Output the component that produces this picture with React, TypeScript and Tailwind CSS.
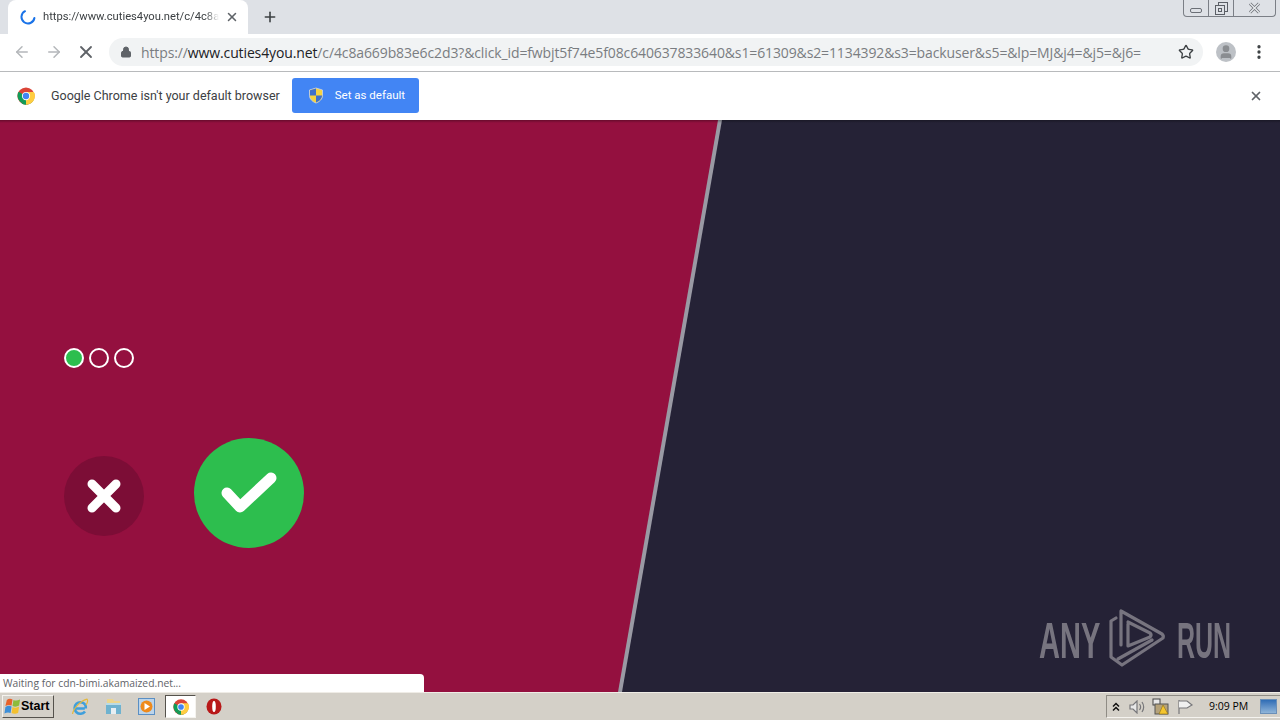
import { ArrowLeft, ArrowRight, X, Lock, Star, MoreVertical, Plus, User } from "lucide-react"

const sans = "font-['Open_Sans','Noto_Sans',sans-serif]"
const narrow = "font-['Roboto','Liberation_Sans',sans-serif]"

function ChromeLogo({ size = 18 }: { size?: number }) {
  return (
    <svg width={size} height={size} viewBox="0 0 48 48">
      <circle cx="24" cy="24" r="23" fill="#db4437" />
      <path d="M24 24 L44 35.5 A23 23 0 0 1 12.5 44 Z" fill="#0f9d58" />
      <path d="M24 13 H45 A23 23 0 0 1 24 47 L24 24 Z" fill="#ffcd40" />
      <path d="M24 24 L13.5 43 A23 23 0 0 1 4 12.5 Z" fill="#0f9d58" />
      <circle cx="24" cy="24" r="11" fill="#fff" />
      <circle cx="24" cy="24" r="8.5" fill="#4285f4" />
    </svg>
  )
}

function ShieldIcon() {
  return (
    <svg width="16" height="17" viewBox="0 0 16 17">
      <path d="M8 1 L14.5 3 V8.5 C14.5 12 11.5 14.8 8 16 C4.5 14.8 1.5 12 1.5 8.5 V3 Z" fill="#f5d33f" stroke="#c9d3e6" strokeWidth="0.8" />
      <path d="M8 1.5 V8.5 H2 V3.3 Z" fill="#3f70c9" />
      <path d="M8 8.5 H14 C14 11.8 11 14.4 8 15.4 Z" fill="#3f70c9" />
    </svg>
  )
}

function StartFlag() {
  return (
    <svg width="17" height="17" viewBox="0 0 18 18">
      <path d="M3 2 C5 0.5 7 0.5 9 1.5 L8 8 C6 7 4 7 1.5 8.5 Z" fill="#e8622a" />
      <path d="M10 2 C12 3 14 3 17 1.5 L16 8 C14 9.5 11 9.5 9 8.5 Z" fill="#8dbb3a" />
      <path d="M1.5 9.5 C4 8 6 8 8 9 L7 16 C5 15 3 15 0.5 16.5 Z" fill="#3d8fd8" />
      <path d="M9 9.5 C11 10.5 14 10.5 16 9 L15 15.5 C13 17 10 17 8 16 Z" fill="#f3c02f" />
    </svg>
  )
}

function IeIcon() {
  return (
    <svg width="18" height="18" viewBox="0 0 18 18" fill="none">
      <path d="M13.8 10.5 H4.5 M14 13.5 A5.8 5.8 0 1 1 14 6.5 Q15 8 14.8 10.5" stroke="#3f9fdc" strokeWidth="2.6" />
      <path d="M1.5 16 C2.5 10 10 2.5 16 1.2 C17.5 3 16 5.5 15 7" stroke="#e5b93d" strokeWidth="1.2" />
    </svg>
  )
}

function FolderIcon() {
  return (
    <svg width="17" height="17" viewBox="0 0 17 17">
      <path d="M2 1 H8 L9 3 H15 V10 H2 Z" fill="#ecd58e" />
      <rect x="1" y="5" width="15" height="11" fill="#6fb2cf" />
      <rect x="1" y="5" width="15" height="2" fill="#b9dbe6" />
      <rect x="6" y="10" width="5" height="6" fill="#e7eef2" />
    </svg>
  )
}

function MediaIcon() {
  return (
    <svg width="17" height="17" viewBox="0 0 17 17">
      <rect x="0.5" y="0.5" width="16" height="16" fill="#bcd4ea" stroke="#5a8fc4" />
      <circle cx="8.5" cy="8.5" r="6" fill="#ee8a1c" />
      <path d="M6.5 5 L12 8.5 L6.5 12 Z" fill="#fff" />
    </svg>
  )
}

function OperaIcon() {
  return (
    <svg width="16" height="17" viewBox="0 0 16 17">
      <ellipse cx="8" cy="8.5" rx="7.5" ry="8" fill="#b81818" />
      <ellipse cx="8" cy="8.5" rx="1.8" ry="5.5" fill="#fff" />
    </svg>
  )
}

function PlayMark() {
  return (
    <svg width="58" height="62" viewBox="8 4 58 62" fill="none" stroke="#77747f" strokeWidth="3.2" strokeLinejoin="round" strokeLinecap="round">
      <path d="M16 14 L11 17 V53 L22 61 L63 34 Q64 32 62 30 L21 7 V41" />
      <path d="M28 20 V42 L50 33 Q52 31 50 29 L28 18" />
      <path d="M18 55 L52 36" />
    </svg>
  )
}

export default function App() {
  return (
    <div className={`flex h-[720px] w-[1280px] flex-col overflow-hidden ${sans}`}>
      {/* tab strip */}
      <div className="relative flex h-[34px] shrink-0 items-end bg-[#dee1e6] pl-2">
        <div className="flex h-[34px] w-[240px] items-center rounded-t-lg bg-white pl-[12px] pr-[9px]">
          <svg width="16" height="16" viewBox="0 0 16 16" fill="none" className="mr-[7px] shrink-0">
            <path d="M5 2.2 A6.5 6.5 0 1 0 14.4 9" stroke="#1a73e8" strokeWidth="2" strokeLinecap="round" />
          </svg>
          <span className={`w-[176px] whitespace-nowrap text-[11.2px] text-[#3c4043] [mask-image:linear-gradient(to_right,black_92%,transparent)] ${narrow}`}>
            https://www.cuties4you.net/c/4c8a
          </span>
          <X className="ml-auto h-[14px] w-[14px] text-[#5f6368]" strokeWidth={2.6} />
        </div>
        <Plus className="mb-[9px] ml-[14px] h-[16px] w-[16px] text-[#3c4043]" strokeWidth={2.4} />
        {/* window buttons */}
        <div className="absolute right-[4px] top-0 flex h-[17px] w-[93px] rounded-b-[4px] border border-t-0 border-[#7b7f86] bg-[#dee1e6]">
          <div className="flex w-[25px] items-end justify-center border-r border-[#7b7f86] pb-[3px]">
            <div className="h-[5px] w-[12px] rounded-[2px] border border-[#6b6f76]" />
          </div>
          <div className="flex w-[25px] items-center justify-center border-r border-[#7b7f86]">
            <svg width="13" height="13" viewBox="0 0 13 13" fill="none" stroke="#5b5f66">
              <rect x="3.5" y="0.5" width="9" height="9" />
              <rect x="0.5" y="3.5" width="9" height="9" fill="#dee1e6" />
              <rect x="3.5" y="6.5" width="3" height="3" />
            </svg>
          </div>
          <div className="flex flex-1 items-center justify-center">
            <svg width="13" height="12" viewBox="0 0 13 12" fill="none">
              <path d="M2 1.5 L11 10.5 M11 1.5 L2 10.5" stroke="#6f7379" strokeWidth="3" />
              <path d="M2 1.5 L11 10.5 M11 1.5 L2 10.5" stroke="#e8eaed" strokeWidth="1.4" />
            </svg>
          </div>
        </div>
      </div>

      {/* toolbar */}
      <div className="flex h-[38px] shrink-0 items-center border-b border-[#b8babc] bg-white pb-px">
        <ArrowLeft className="ml-[13px] h-[18px] w-[18px] text-[#b4b7ba]" strokeWidth={2} />
        <ArrowRight className="ml-[14px] h-[18px] w-[18px] text-[#b4b7ba]" strokeWidth={2} />
        <X className="ml-[13px] h-[20px] w-[20px] text-[#5f6368]" strokeWidth={2.2} />
        <div className="ml-[13px] flex h-[28px] w-[1094px] items-center rounded-full bg-[#f1f3f4] pl-[11px]">
          <Lock className="h-[12px] w-[12px] fill-[#5f6368] text-[#5f6368]" strokeWidth={2} />
          <span className="ml-[9px] whitespace-nowrap text-[14px] tracking-[-0.12px] text-[#7a7d81]">
            https://<span className="text-[#202124]">www.cuties4you.net</span>/c/4c8a669b83e6c2d3?&click_id=fwbjt5f74e5f08c640637833640&s1=61309&s2=1134392&s3=backuser&s5=&lp=MJ&j4=&j5=&j6=
          </span>
          <Star className="ml-auto mr-[9px] h-[16px] w-[16px] text-[#3c4043]" strokeWidth={2} />
        </div>
        <div className="ml-[13px] flex h-[20px] w-[20px] items-center justify-center overflow-hidden rounded-full bg-[#bdc1c6]">
          <User className="h-[16px] w-[16px] fill-[#8a8d91] text-[#8a8d91]" />
        </div>
        <MoreVertical className="ml-[14px] h-[18px] w-[18px] text-[#3c4043]" strokeWidth={2.4} />
      </div>

      {/* default browser bar */}
      <div className="flex h-[48px] shrink-0 items-center bg-white pl-[17px]">
        <ChromeLogo />
        <span className={`ml-[16px] text-[12.5px] text-[#3c4043] ${narrow}`}>Google Chrome isn't your default browser</span>
        <div className="mb-[1px] ml-[12px] flex h-[35px] w-[127px] items-center rounded-[3px] bg-[#4285f4] pl-[16px]">
          <ShieldIcon />
          <span className={`ml-[11px] text-[11.5px] text-white ${narrow}`}>Set as default</span>
        </div>
        <X className="ml-auto mr-[17px] h-[14px] w-[14px] text-[#5f6368]" strokeWidth={3} />
      </div>

      {/* page */}
      <div className="relative flex-1 overflow-hidden bg-[#252236]">
        <div className="absolute inset-0 bg-[#9a9aa4] [clip-path:polygon(0_0,722px_0,622px_100%,0_100%)]" />
        <div className="absolute inset-0 bg-[#94103f] [clip-path:polygon(0_0,718px_0,618px_100%,0_100%)]" />
        <div className="absolute inset-x-0 top-0 h-[3px] bg-gradient-to-b from-black/30 to-transparent" />

        <div className="relative flex w-[320px] flex-col pl-[64px] pt-[228px]">
          <div className="flex gap-[5px]">
            <div className="h-5 w-5 rounded-full border-2 border-white bg-[#2dbe4e]" />
            <div className="h-5 w-5 rounded-full border-2 border-white" />
            <div className="h-5 w-5 rounded-full border-2 border-white" />
          </div>
          <div className="mt-[70px] flex items-center">
            <div className="mt-[5px] flex h-20 w-20 items-center justify-center rounded-full bg-[#7c0d36]">
              <svg width="36" height="36" viewBox="0 0 36 36" stroke="#fff" strokeWidth="9" strokeLinecap="round">
                <path d="M6 6 L30 30 M30 6 L6 30" />
              </svg>
            </div>
            <div className="ml-[50px] flex h-[110px] w-[110px] items-center justify-center rounded-full bg-[#2dbe4e]">
              <svg width="56" height="46" viewBox="0 0 56 46" fill="none" stroke="#fff" strokeWidth="11" strokeLinecap="round" strokeLinejoin="round">
                <path d="M6 23 L19 37 L50 8" />
              </svg>
            </div>
          </div>
        </div>

        {/* watermark */}
        <div className="absolute bottom-[22px] right-[50px] flex items-center text-[#77747f]">
          <span className="mt-[3px] w-[69px] origin-left scale-x-[0.58] whitespace-nowrap font-['Liberation_Sans'] text-[50px] font-bold leading-none">ANY</span>
          <PlayMark />
          <span className="ml-[11px] mt-[3px] w-[53px] origin-left scale-x-[0.5] whitespace-nowrap font-['Liberation_Sans'] text-[50px] font-bold leading-none">RUN</span>
        </div>

        {/* status bubble */}
        <div className="absolute bottom-0 left-0 flex h-[18px] w-[424px] items-center rounded-tr-[4px] bg-white pl-[3px] pt-px">
          <span className="text-[10.3px] text-[#5f6368]">Waiting for cdn-bimi.akamaized.net...</span>
        </div>
      </div>

      {/* windows taskbar */}
      <div className="flex h-[28px] shrink-0 items-center border-t border-[#efece6] bg-[#d4d0c8]">
        <div className="ml-[2px] flex h-[23px] w-[52px] items-center border border-[#f5f3ef] border-b-[#55524c] border-r-[#55524c] pl-[1px]">
          <StartFlag />
          <span className="font-['Liberation_Sans'] text-[12.5px] font-bold text-black">Start</span>
        </div>
        <div className="ml-[17px] flex items-center"><IeIcon /></div>
        <div className="ml-[16px] flex items-center"><FolderIcon /></div>
        <div className="ml-[16px] flex items-center"><MediaIcon /></div>
        <div className="ml-[10px] flex h-[23px] w-[31px] items-center justify-center border border-[#55524c] border-b-[#f5f3ef] border-r-[#f5f3ef] bg-white">
          <ChromeLogo size={16} />
        </div>
        <div className="ml-[10px] flex items-center"><OperaIcon /></div>

        <div className="ml-auto flex h-[23px] w-[174px] items-center border border-[#8f8c85] border-b-[#f5f3ef] border-r-0 pl-[5px]">
          <svg width="8" height="10" viewBox="0 0 8 10" fill="none" stroke="#111" strokeWidth="1.5">
            <path d="M1 4.5 L4 1.5 L7 4.5 M1 8.5 L4 5.5 L7 8.5" />
          </svg>
          <svg width="16" height="14" viewBox="0 0 16 14" fill="none" stroke="#77777a" strokeWidth="1.2" className="ml-[9px]">
            <path d="M1 5 H4 L8 1 V13 L4 9 H1 Z" fill="#e8e8e8" />
            <path d="M10.5 4 C12 6 12 8 10.5 10 M13 2 C15 5 15 9 13 12" />
          </svg>
          <svg width="18" height="17" viewBox="0 0 18 17" className="ml-[7px]">
            <rect x="1" y="1" width="7" height="6" fill="#e8e8e8" stroke="#444" />
            <rect x="3" y="6" width="13" height="10" fill="#b5a27a" stroke="#555" />
            <path d="M11 7 L16 16 H7 Z" fill="#f4c52e" stroke="#8a6d10" strokeWidth="0.6" />
          </svg>
          <svg width="17" height="16" viewBox="0 0 17 16" fill="none" stroke="#77777a" strokeWidth="1.2" className="ml-[7px]">
            <path d="M2 1 V15" />
            <path d="M2 2 H10 L15 6 L10 9 H2" fill="#f0f0f0" />
          </svg>
          <span className="ml-[15px] whitespace-nowrap font-['Open_Sans'] text-[10.5px] text-black">9:09 PM</span>
          <div className="ml-auto mr-[3px] h-[15px] w-[17px] border border-[#6a8fb8] bg-gradient-to-b from-[#2f6db5] to-[#8fb4d8]" />
        </div>
      </div>
    </div>
  )
}
